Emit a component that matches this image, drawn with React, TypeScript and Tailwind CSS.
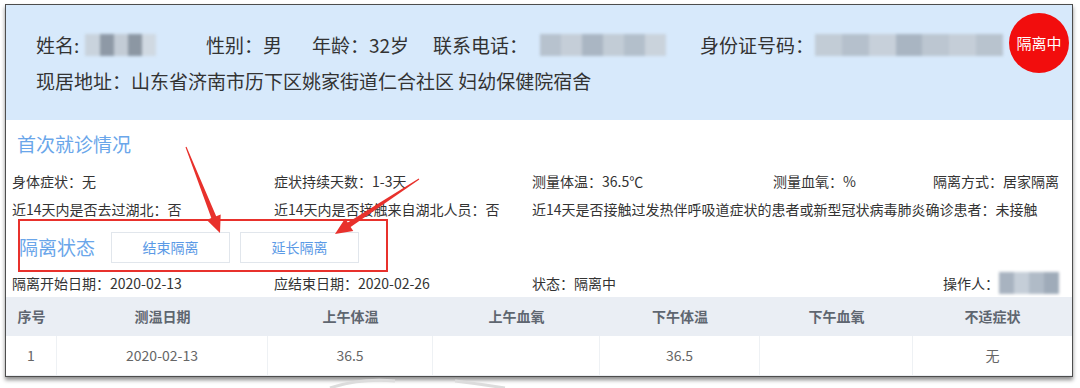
import React from "react";

const font = { fontFamily: '"Noto Sans CJK SC", "Noto Sans", sans-serif' };

function Blur({ w, tones }: { w: number; tones: string[] }) {
  return (
    <div className="flex h-[22px] blur-[1.5px]" style={{ width: w }}>
      {tones.map((t, i) => (
        <div key={i} className="flex-1 h-full" style={{ background: t }} />
      ))}
    </div>
  );
}

function arrow(x1: number, y1: number, x2: number, y2: number) {
  const dx = x2 - x1;
  const dy = y2 - y1;
  const len = Math.hypot(dx, dy);
  const ux = dx / len;
  const uy = dy / len;
  const nx = -uy;
  const ny = ux;
  const head = 17;
  const hw = 7.5;
  const bx = x2 - ux * head;
  const by = y2 - uy * head;
  const p = (x: number, y: number) => `${x.toFixed(1)},${y.toFixed(1)}`;
  return [
    p(x1 + nx * 0.5, y1 + ny * 0.5),
    p(bx + nx * 2.6, by + ny * 2.6),
    p(bx + nx * hw, by + ny * hw),
    p(x2, y2),
    p(bx - nx * hw, by - ny * hw),
    p(bx - nx * 2.6, by - ny * 2.6),
    p(x1 - nx * 0.5, y1 - ny * 0.5),
  ].join(" ");
}

const cols = [
  { t: "序号", w: "w-[51px]" },
  { t: "测温日期", w: "w-[211px]" },
  { t: "上午体温", w: "w-[165px]" },
  { t: "上午血氧", w: "w-[167px]" },
  { t: "下午体温", w: "w-[160px]" },
  { t: "下午血氧", w: "w-[153px]" },
  { t: "不适症状", w: "flex-1" },
];
const row = ["1", "2020-02-13", "36.5", "", "36.5", "", "无"];

export default function App() {
  return (
    <div className="relative w-[1080px] h-[388px] bg-white overflow-hidden" style={font}>
      <div className="ml-[5px] pt-[4px]">
        <div className="relative w-[1068px] border border-[#4d4d4d] bg-white shadow-[0_3px_4px_rgba(0,0,0,0.45)] flex flex-col">
          {/* header */}
          <div className="relative h-[115px] bg-[#d7e9fb] pl-[30px] pt-[26px] text-[19px] text-[#333] flex flex-col gap-[8px]">
            <div className="flex items-center h-[28px] leading-[28px]">
              <div className="w-[170px] flex items-center">
                <span>姓名:</span>
                <div className="ml-[6px]">
                  <Blur w={71} tones={["#c9d3dd", "#8e99a6", "#c3ccd6", "#8c97a3", "#d0d9e2"]} />
                </div>
              </div>
              <div className="w-[106px]">性别：男</div>
              <div className="w-[121px]">年龄：32岁</div>
              <div className="w-[267px] flex items-center">
                <span>联系电话：</span>
                <div className="ml-[12px]">
                  <Blur w={126} tones={["#b7c2ce", "#c5ced8", "#aab6c3", "#c2ccd6", "#b3bfcb", "#cad3dc"]} />
                </div>
              </div>
              <div className="flex items-center">
                <span>身份证号码：</span>
                <div className="ml-[1px]">
                  <Blur w={188} tones={["#c2ccd6", "#b5c0cc", "#c7d0da", "#a9b5c2", "#bcc6d1", "#c5ced8", "#b8c3ce"]} />
                </div>
              </div>
            </div>
            <div className="h-[28px] leading-[28px]">现居地址：山东省济南市历下区姚家街道仁合社区 妇幼保健院宿舍</div>
            <div className="absolute left-[1003px] top-[8px] w-[60px] h-[60px] rounded-full bg-[#f20d0d] flex items-center justify-center text-white text-[15px]">
              隔离中
            </div>
          </div>

          {/* body */}
          <div className="pt-[10px] text-[14px] text-[#333]">
            <div className="pl-[11px] h-[28px] leading-[28px] text-[19px] text-[#6aa6ea]">首次就诊情况</div>
            <div className="mt-[9px] pl-[6px] pr-[13px] h-[28px] flex items-center">
              <div className="w-[262px]">身体症状：无</div>
              <div className="w-[258px]">症状持续天数：1-3天</div>
              <div className="w-[241px]">测量体温：36.5℃</div>
              <div>测量血氧：%</div>
              <div className="ml-auto">隔离方式：居家隔离</div>
            </div>
            <div className="pl-[6px] h-[28px] flex items-center">
              <div className="w-[262px]">近14天内是否去过湖北：否</div>
              <div className="w-[258px]">近14天内是否接触来自湖北人员：否</div>
              <div>近14天是否接触过发热伴呼吸道症状的患者或新型冠状病毒肺炎确诊患者：未接触</div>
            </div>
            <div className="mt-[8px] pl-[13px] h-[33px] flex items-center">
              <div className="text-[19px] text-[#6aa6ea] w-[92px]">隔离状态</div>
              <button className="w-[119px] h-[31px] border border-[#e1e6ec] bg-white text-[14px] text-[#5b9ae6]">结束隔离</button>
              <button className="ml-[10px] w-[119px] h-[31px] border border-[#e1e6ec] bg-white text-[14px] text-[#5b9ae6]">延长隔离</button>
            </div>
            <div className="mt-[6px] pl-[6px] pr-[13px] h-[26px] flex items-center">
              <div className="w-[262px]">隔离开始日期：2020-02-13</div>
              <div className="w-[258px]">应结束日期：2020-02-26</div>
              <div>状态：隔离中</div>
              <div className="ml-auto flex items-center">
                <span>操作人：</span>
                <Blur w={60} tones={["#a8b3c0", "#c5ced8", "#b0bbc7", "#9fabb9"]} />
              </div>
            </div>
          </div>

          {/* table */}
          <div className="mt-[1px] text-[14px]">
            <div className="h-[39px] bg-[#eaeef4] flex items-center font-bold text-[#5f6670]">
              {cols.map((c) => (
                <div key={c.t} className={`${c.w} text-center`}>{c.t}</div>
              ))}
            </div>
            <div className="h-[40px] flex border-b border-[#eceff3] text-[#666]">
              {cols.map((c, i) => (
                <div
                  key={c.t}
                  className={`${c.w} flex items-center justify-center ${i < cols.length - 1 ? "border-r border-[#eef1f4]" : ""}`}
                >
                  {row[i]}
                </div>
              ))}
            </div>
          </div>
        </div>
      </div>

      {/* annotations */}
      <div className="absolute left-[18px] top-[219px] w-[370px] h-[53px] border-2 border-[#e8312c]" />
      <svg className="absolute left-0 top-0" width="1080" height="388">
        <polygon points={arrow(186, 147, 220, 233)} fill="#e8312c" />
        <polygon points={arrow(419, 179, 335, 234)} fill="#e8312c" />
        <path d="M330 388 Q 360 378 395 381" stroke="#dcdcdc" strokeWidth="3" fill="none" />
        <path d="M455 381 Q 480 384 505 388" stroke="#dcdcdc" strokeWidth="3" fill="none" />
      </svg>
    </div>
  );
}
